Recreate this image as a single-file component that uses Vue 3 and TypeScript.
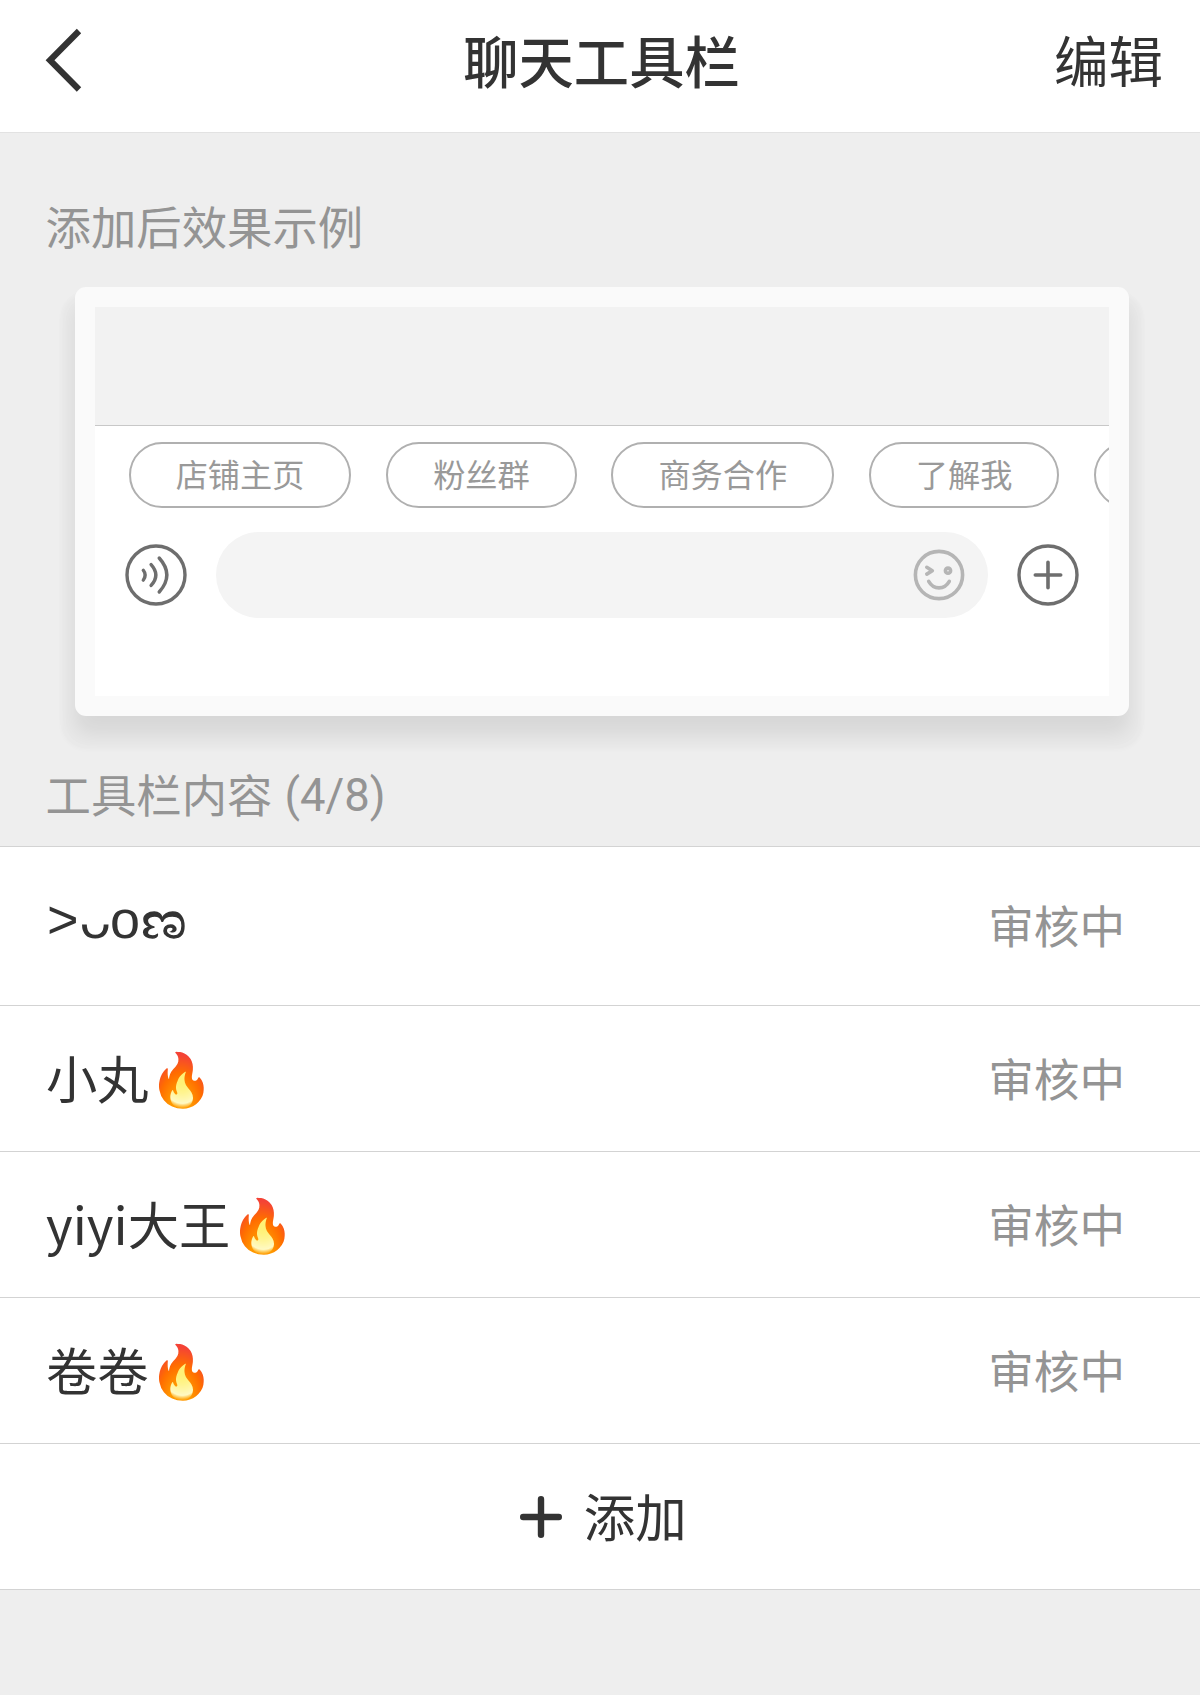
<script setup lang="ts">
interface ToolItem {
  name: string
  fire: boolean
  status: string
}

const samples: string[] = ['店铺主页', '粉丝群', '商务合作', '了解我']

const items: ToolItem[] = [
  { name: '>ᴗoಣ', fire: false, status: '审核中' },
  { name: '小丸', fire: true, status: '审核中' },
  { name: 'yiyi大王', fire: true, status: '审核中' },
  { name: '卷卷', fire: true, status: '审核中' },
]
const limit = 8

const isKaomoji = (name: string): boolean => name.startsWith('>')
</script>

<template>
  <div class="page">
    <header class="nav">
      <svg class="back" width="40" height="66" viewBox="0 0 40 66">
        <path d="M37 4 8 33.200l29 29.300" fill="none" stroke="#333" stroke-width="6.2" />
      </svg>
      <h1 class="title">聊天工具栏</h1>
      <span class="edit">编辑</span>
    </header>

    <div class="label first">添加后效果示例</div>

    <section class="card">
      <div class="preview">
        <div class="chat"></div>
        <div class="pills">
          <span v-for="s in samples" :key="s" class="pill">{{ s }}</span>
          <span class="pill next"></span>
        </div>
        <div class="bar">
          <svg width="62" height="62" viewBox="-31 -31 62 62" fill="none" stroke="#6e6e6e" stroke-width="3.4" stroke-linecap="round">
            <circle r="29" />
            <path d="M-12.700-4.800Q-9-.2-12.700 5.100M-4.900-10.400Q4.600 0-4.900 10.400M3.200-17Q18.500 0 3.200 17" />
          </svg>
          <div class="input">
            <svg width="52" height="52" viewBox="-26 -26 52 52" fill="none" stroke="#b5b5b5" stroke-width="3.6" stroke-linecap="round" stroke-linejoin="round">
              <circle r="23.6" />
              <path d="M-12.200-7.700-6.700-4.300-12.200-.9M-10.300 6.400C-5.500 15 5.500 15 10.300 6.400" />
              <circle cx="9" cy="-4.300" r="2.600" />
            </svg>
          </div>
          <svg width="62" height="62" viewBox="-31 -31 62 62" fill="none" stroke="#6e6e6e" stroke-width="3.4" stroke-linecap="round">
            <circle r="29" />
            <path d="M-12.700 0h25.400M0-12.700v25.400" stroke-width="3.600" />
          </svg>
        </div>
      </div>
    </section>

    <div class="label second"><span>工具栏内容</span><span class="count">({{ items.length }}/{{ limit }})</span></div>

    <main class="list">
      <div v-for="item in items" :key="item.name" class="row">
        <span v-if="isKaomoji(item.name)" class="name kaomoji">
          <span v-for="(ch, i) in item.name" :key="i" :class="['k', 'k' + i]">{{ ch }}</span>
        </span>
        <span v-else class="name">{{ item.name }}<span v-if="item.fire" class="fire">🔥</span></span>
        <span class="status">{{ item.status }}</span>
      </div>
      <div class="row add">
        <svg width="44" height="44" viewBox="0 0 44 44" stroke="#333" stroke-width="6.4" stroke-linecap="round">
          <path d="M4.200 22h35.600M22 4.200v35.600" />
        </svg>
        <span class="add-text">添加</span>
      </div>
    </main>
  </div>
</template>

<style>
body {
  margin: 0;
  background: #eee;
}
</style>

<style scoped>
.page {
  width: 1200px;
  height: 1695px;
  overflow: hidden;
  background: #eee;
  color: #333;
  font-family: "Noto Sans CJK SC", "Noto Sans", sans-serif;
}
.nav {
  box-sizing: border-box;
  height: 133px;
  padding: 0 37px 14px 42px;
  display: grid;
  grid-template-columns: 1fr auto 1fr;
  align-items: center;
  background: #fff;
  border-bottom: 1px solid #e2e2e2;
}
.back {
  display: block;
  margin-top: 2px;
}
.title {
  margin: 0 2px 0 0;
  font-size: 55.300px;
  line-height: 80px;
  font-weight: 500;
}
.edit {
  justify-self: end;
  font-size: 54.500px;
  line-height: 80px;
}
.label {
  font-size: 45.400px;
  line-height: 60px;
  color: #949494;
  padding-left: 45.500px;
}
.first {
  padding-top: 62px;
}
.card {
  box-sizing: border-box;
  width: 1054px;
  height: 429px;
  margin: 32px 0 0 75px;
  padding: 20px;
  border-radius: 11px;
  background: #fafafa;
  box-shadow: 0 20px 4px 14px rgba(0, 0, 0, 0.02), 0 18px 20px rgba(0, 0, 0, 0.08);
}
.preview {
  height: 389px;
  overflow: hidden;
  background: #fff;
}
.chat {
  height: 118px;
  background: #f2f2f2;
  border-bottom: 1px solid #c8c8c8;
}
.pills {
  display: flex;
  gap: 34.700px;
  padding: 16px 0 0 33.700px;
}
.pill {
  box-sizing: border-box;
  flex: none;
  height: 66px;
  padding: 0 45px;
  border: 2px solid #b0b0b0;
  border-radius: 33px;
  font-size: 32.200px;
  line-height: 59px;
  color: #999;
}
.next {
  width: 190px;
}
.bar {
  display: flex;
  align-items: center;
  margin-top: 24px;
  padding-left: 30px;
}
.input {
  box-sizing: border-box;
  width: 772px;
  height: 86px;
  margin: 0 29px;
  padding-right: 23px;
  border-radius: 43px;
  background: #f4f4f4;
  display: flex;
  align-items: center;
  justify-content: flex-end;
}
.second {
  display: flex;
  padding-top: 47px;
  height: 83px;
}
.count {
  height: 60px;
  margin: 3px 0 0 12px;
  font-family: Roboto, "Noto Sans CJK SC", sans-serif;
}
.list {
  border-top: 1px solid #d3d3d3;
}
.row {
  box-sizing: border-box;
  height: 146px;
  padding: 0 75px 0 46px;
  display: flex;
  align-items: center;
  justify-content: space-between;
  background: #fff;
  border-bottom: 1px solid #d3d3d3;
}
.row:first-child {
  height: 159px;
}
.name {
  display: flex;
  align-items: center;
  font-size: 51.300px;
  line-height: 76px;
  padding-bottom: 4px;
}
.kaomoji {
  padding-bottom: 17px;
  align-items: baseline;
}
.k {
  display: block;
}
.k0,
.k2 {
  font-family: "Liberation Sans", sans-serif;
  font-size: 54px;
}
.k0 {
  width: 32px;
  padding-left: 1px;
}
.k1 {
  width: 31px;
}
.k2 {
  width: 30.500px;
}
.k3 {
  transform: scaleX(1.26);
  transform-origin: left center;
  -webkit-text-stroke: 1.300px #333;
}
.fire {
  margin: 9px 0 0 0.500px;
  font-size: 52px;
  font-family: "Noto Color Emoji", sans-serif;
}
.status {
  font-size: 45.600px;
  line-height: 60px;
  color: #949494;
  padding-bottom: 4px;
}
.add {
  justify-content: center;
  gap: 20.500px;
  padding: 0 0 0 6px;
  font-size: 51.500px;
}
.add-text {
  padding-bottom: 4px;
}
</style>
